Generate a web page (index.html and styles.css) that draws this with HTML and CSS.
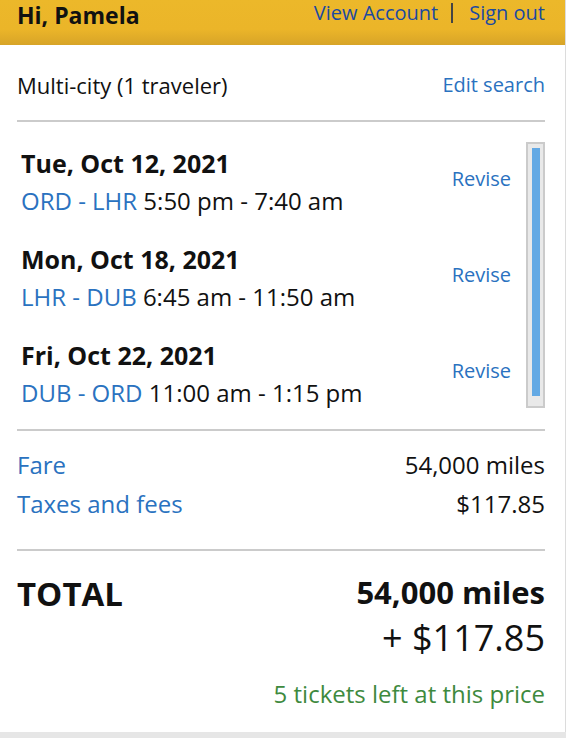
FILE: index.html
```html
<!DOCTYPE html>
<html>
  <head>
    <title>Trip summary</title>
    <link rel="stylesheet" href="styles.css">
  </head>
  <body>
    <div class="card">
      <header class="topbar">
        <span class="greeting">Hi, Pamela</span>
        <nav class="account">
          <a href="#">View Account</a>
          <span class="sep"></span>
          <a href="#">Sign out</a>
        </nav>
      </header>

      <div class="search">
        <span class="trip-type">Multi-city (1 traveler)</span>
        <a href="#" class="link">Edit search</a>
      </div>

      <div class="flights">
        <ul class="flight-list">
          <li class="flight">
            <div>
              <div class="date">Tue, Oct 12, 2021</div>
              <div class="route"><a href="#" class="link">ORD - LHR</a> 5:50 pm - 7:40 am</div>
            </div>
            <a href="#" class="link revise">Revise</a>
          </li>
          <li class="flight">
            <div>
              <div class="date">Mon, Oct 18, 2021</div>
              <div class="route"><a href="#" class="link">LHR - DUB</a> 6:45 am - 11:50 am</div>
            </div>
            <a href="#" class="link revise">Revise</a>
          </li>
          <li class="flight">
            <div>
              <div class="date">Fri, Oct 22, 2021</div>
              <div class="route"><a href="#" class="link">DUB - ORD</a> 11:00 am - 1:15 pm</div>
            </div>
            <a href="#" class="link revise">Revise</a>
          </li>
        </ul>
        <div class="scrollbar"><div class="thumb"></div></div>
      </div>

      <table class="fare">
        <tr>
          <td><a href="#" class="link">Fare</a></td>
          <td class="amount">54,000 miles</td>
        </tr>
        <tr>
          <td><a href="#" class="link">Taxes and fees</a></td>
          <td class="amount">$117.85</td>
        </tr>
      </table>

      <div class="total">
        <span class="total-label">TOTAL</span>
        <div class="total-amount">
          <div class="miles">54,000 miles</div>
          <div class="cash">+ $117.85</div>
        </div>
      </div>

      <p class="left">5 tickets left at this price</p>
    </div>
  </body>
</html>
```

FILE: styles.css
```css
body {
  margin: 0;
  background: #e6e6e6;
  font-family: "Open Sans", "Noto Sans", sans-serif;
  color: #111;
}

a {
  text-decoration: none;
}

.link {
  color: #2a72c0;
}

.card {
  width: 565px;
  height: 732px;
  background: #fff;
  border-right: 1px solid #dcdcdc;
  box-shadow: 0 2px 6px rgba(0, 0, 0, 0.12);
}

.topbar {
  height: 44px;
  display: flex;
  justify-content: space-between;
  align-items: flex-start;
  padding: 1px 20px 0 17px;
  background: linear-gradient(#ecb82a 0%, #ebb529 65%, #d7a428 100%);
}

.greeting {
  font-size: 23px;
  font-weight: bold;
  line-height: 28px;
  color: #111;
}

.account {
  display: flex;
  align-items: center;
  height: 24px;
  font-size: 20px;
  line-height: 24px;
}

.account a {
  color: #1b4aa1;
}

.sep {
  width: 2px;
  height: 20px;
  margin: 0 16px 0 13px;
  background: #444;
}

.search {
  display: flex;
  justify-content: space-between;
  align-items: center;
  margin: 25px 20px 0 17px;
  padding-bottom: 20px;
  font-size: 20px;
  line-height: 30px;
  border-bottom: 2px solid #cbcbcb;
}

.trip-type {
  font-size: 22px;
}

.flights {
  display: flex;
  margin: 0 20px 0 17px;
  padding: 12px 0 7px;
  border-bottom: 2px solid #cbcbcb;
}

.flight-list {
  flex: 1;
  list-style: none;
  margin: 0;
  padding: 0 15px 0 4px;
}

.flight {
  display: flex;
  justify-content: space-between;
  align-items: center;
  height: 96px;
}

.date {
  font-size: 25px;
  font-weight: bold;
  line-height: 38px;
}

.route {
  font-size: 24px;
  line-height: 38px;
}

.revise {
  font-size: 20px;
  margin-top: -8px;
}

.scrollbar {
  width: 15px;
  height: 248px;
  margin-top: 8px;
  padding: 4px 0 10px;
  background: #e9e9e9;
  border: 2px solid #cbcbcb;
  display: flex;
  justify-content: center;
}

.thumb {
  width: 8px;
  background: #63a9e4;
}

.fare {
  width: 528px;
  margin: 14px 20px 0 17px;
  border-collapse: collapse;
  font-size: 24px;
}

.fare td {
  padding: 0;
  height: 39px;
  line-height: 39px;
}

.amount {
  text-align: right;
}

.total {
  display: flex;
  justify-content: space-between;
  margin: 26px 20px 0 17px;
  padding-top: 18px;
  border-top: 2px solid #cbcbcb;
}

.total-label {
  font-size: 33px;
  font-weight: bold;
  line-height: 50px;
}

.total-amount {
  text-align: right;
}

.miles {
  font-size: 31px;
  font-weight: bold;
  line-height: 46px;
}

.cash {
  font-size: 36px;
  line-height: 46px;
}

.left {
  margin: 17px 20px 0 17px;
  text-align: right;
  font-size: 24px;
  line-height: 32px;
  color: #3e8a3e;
}
```
